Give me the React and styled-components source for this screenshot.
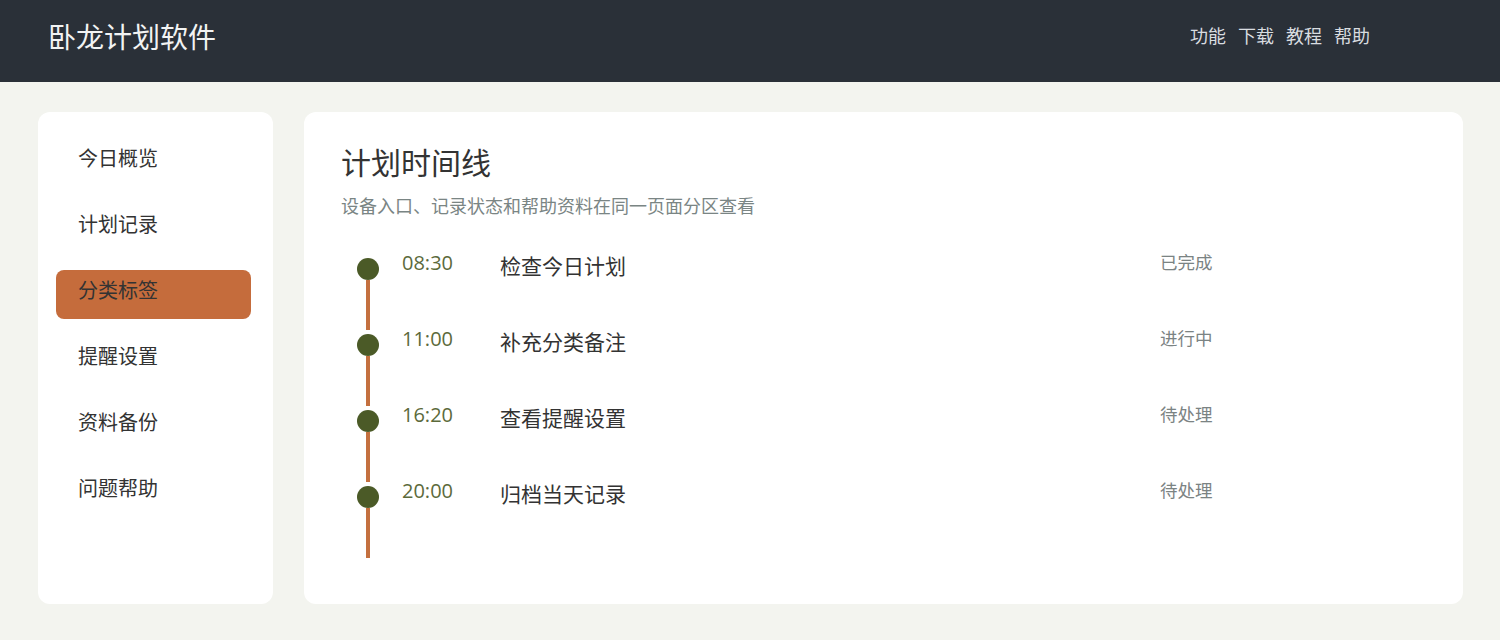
import React from "react";
import styled, { createGlobalStyle } from "styled-components";

const GlobalStyle = createGlobalStyle`
  html, body {
    margin: 0;
    padding: 0;
    background: #f3f4ef;
    font-family: "Noto Sans CJK SC", "Noto Sans", sans-serif;
  }
  * { box-sizing: border-box; }
`;

const Header = styled.header`
  height: 82px;
  background: #2a3038;
  display: flex;
  align-items: center;
  justify-content: space-between;
  padding: 0 130px 8px 48px;
`;

const Brand = styled.h1`
  margin: 0;
  font-size: 28px;
  font-weight: 400;
  color: #f2f3f3;
  line-height: 1.2;
`;

const Nav = styled.nav`
  display: flex;
  gap: 12px;
  margin-bottom: 2px;
`;

const NavLink = styled.a`
  font-size: 18px;
  color: #d9dde0;
  text-decoration: none;
  line-height: 1.2;
`;

const Layout = styled.div`
  display: grid;
  grid-template-columns: 235px 1fr;
  gap: 31px;
  padding: 30px 37px 36px 38px;
`;

const Card = styled.div`
  background: #ffffff;
  border-radius: 12px;
  height: 492px;
`;

const Sidebar = styled(Card)`
  padding: 26px 22px 22px 18px;
  display: flex;
  flex-direction: column;
  gap: 17px;
`;

const SideItem = styled.div`
  height: 49px;
  padding: 6px 0 0 22px;
  border-radius: 8px;
  font-size: 20px;
  line-height: 28px;
  color: #333333;
  background: ${(p) => (p.$active ? "#c56c3c" : "transparent")};
`;

const Main = styled(Card)`
  padding: 30px 37px;
`;

const Title = styled.h2`
  margin: 0;
  font-size: 30px;
  font-weight: 400;
  color: #333333;
  line-height: 1.3;
`;

const Subtitle = styled.p`
  margin: 13px 0 0;
  font-size: 18px;
  color: #7a8584;
  line-height: 1.3;
`;

const Timeline = styled.div`
  margin-top: 41px;
  display: flex;
  flex-direction: column;
`;

const Row = styled.div`
  display: flex;
  align-items: flex-start;
  height: 76px;
`;

const Track = styled.div`
  width: 22px;
  margin-left: 16px;
  display: flex;
  flex-direction: column;
  align-items: center;
`;

const Dot = styled.span`
  width: 22px;
  height: 22px;
  border-radius: 50%;
  background: #4b5a27;
`;

const Line = styled.span`
  width: 4px;
  height: 50px;
  background: #c4703f;
`;

const Time = styled.span`
  margin-left: 23px;
  width: 98px;
  font-family: "Open Sans", "Noto Sans CJK SC", sans-serif;
  font-size: 20px;
  color: #5c6a3b;
  line-height: 1;
  margin-top: -5px;
`;

const Task = styled.span`
  flex: 1;
  font-size: 21px;
  color: #333333;
  line-height: 1;
  margin-top: -3px;
`;

const Status = styled.span`
  width: 266px;
  font-size: 17.5px;
  color: #7b8383;
  line-height: 1;
  margin-top: -5px;
`;

const navLinks = ["功能", "下载", "教程", "帮助"];
const sideItems = ["今日概览", "计划记录", "分类标签", "提醒设置", "资料备份", "问题帮助"];
const entries = [
  { time: "08:30", task: "检查今日计划", status: "已完成" },
  { time: "11:00", task: "补充分类备注", status: "进行中" },
  { time: "16:20", task: "查看提醒设置", status: "待处理" },
  { time: "20:00", task: "归档当天记录", status: "待处理" },
];

export default function App() {
  return (
    <>
      <GlobalStyle />
      <Header>
        <Brand>卧龙计划软件</Brand>
        <Nav>
          {navLinks.map((l) => (
            <NavLink key={l} href="#">{l}</NavLink>
          ))}
        </Nav>
      </Header>
      <Layout>
        <Sidebar>
          {sideItems.map((s) => (
            <SideItem key={s} $active={s === "分类标签"}>{s}</SideItem>
          ))}
        </Sidebar>
        <Main>
          <Title>计划时间线</Title>
          <Subtitle>设备入口、记录状态和帮助资料在同一页面分区查看</Subtitle>
          <Timeline>
            {entries.map((e) => (
              <Row key={e.time}>
                <Track>
                  <Dot />
                  <Line />
                </Track>
                <Time>{e.time}</Time>
                <Task>{e.task}</Task>
                <Status>{e.status}</Status>
              </Row>
            ))}
          </Timeline>
        </Main>
      </Layout>
    </>
  );
}
